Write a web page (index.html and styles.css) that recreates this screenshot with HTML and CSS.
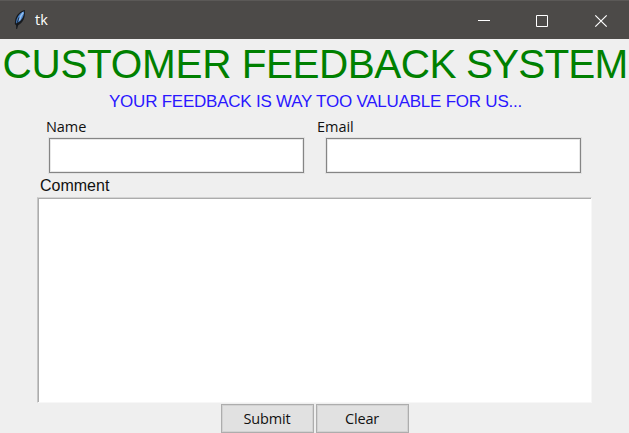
FILE: index.html
```html
<!DOCTYPE html>
<html lang="en">
<head>
<meta charset="utf-8">
<title>tk</title>
<link rel="stylesheet" href="styles.css">
</head>
<body>
<div class="window">
  <header class="titlebar">
    <svg class="feather" width="14" height="20" viewBox="0 0 14 20">
      <path d="M11.8 0C7.5 .8 3 5 2.2 10L1.8 14L3.3 15.5L3.7 19.3L5 15.5C9.8 12.5 12.6 8 11.8 0Z" fill="#171a1e"/>
      <path d="M11.1 1.2C7 2.5 3.2 7 3 13.6C8.2 11 11.2 7 11.1 1.2Z" fill="#4681c8"/>
      <path d="M10.2 2.5C8.3 4.7 7.1 7.5 6.3 10.5" stroke="#94bdec" stroke-width="1.7" fill="none"/>
      <path d="M6 7.5L4.3 12.5L3.7 19" stroke="#11151a" stroke-width=".8" fill="none"/>
    </svg>
    <span class="caption">tk</span>
    <svg class="controls" width="131" height="14" viewBox="0 0 131 14" fill="none" stroke="#fff">
      <path d="M0 6.5H12M58.5 1.5H69.5V12.5H58.5Z"/>
      <path d="M117.3 1.3L128.7 12.7M128.7 1.3L117.3 12.7" stroke-width="1.2"/>
    </svg>
  </header>
  <h1 class="title"><span class="first">CUSTOMER</span> FEEDBACK <span class="last">SYSTEM</span></h1>
  <p class="subtitle">YOUR FEEDBACK IS WAY TOO VALUABLE FOR US...</p>
  <form class="form">
    <div class="fields">
      <div class="field name"><label for="name">Name</label><input id="name" type="text"></div>
      <div class="field email"><label for="email">Email</label><input id="email" type="text"></div>
    </div>
    <label class="comment-label" for="comment">Comment</label>
    <textarea class="comment" id="comment"></textarea>
    <div class="actions">
      <button type="button">Submit</button>
      <button type="button">Clear</button>
    </div>
  </form>
</div>
</body>
</html>
```

FILE: styles.css
```css
* { box-sizing: border-box; }
body { margin: 0; overflow: hidden; background: #efefef; color: #111; font: 15px "Open Sans", sans-serif; }
.window { width: 629px; height: 433px; overflow: hidden; }
.titlebar { height: 39px; display: flex; align-items: center; padding: 0 20px 0 13px; background: #4c4a48; border-top: 1px solid #5b5957; color: #fff; }
.caption { margin: -1px 0 0 8px; font-size: 14.5px; line-height: 20px; }
.controls { margin: 1px 0 0 auto; }
.title { margin: 0; height: 50px; padding-left: 2.5px; font: 40.5px/50px "Liberation Sans", sans-serif; letter-spacing: -0.52px; color: #008000; white-space: nowrap; }
.first { letter-spacing: -0.3px; }
.last { margin-left: -0.8px; letter-spacing: -0.85px; }
.subtitle { margin: 0; height: 27px; padding-left: 109px; font: 17px/26px "Liberation Sans", sans-serif; letter-spacing: -0.23px; color: #2a17ff; white-space: nowrap; }
.form { margin: 0; }
.fields { display: flex; gap: 13px; padding-left: 37px; height: 58px; }
.field label { display: block; height: 22px; line-height: 21px; font-size: 14.5px; letter-spacing: -0.05px; }
.name { padding-left: 12px; }
.name label { margin-left: -3px; }
.email { padding-left: 9px; }
.email label { margin-left: -9px; }
.field input { display: block; width: 255px; height: 35px; margin: 0; padding: 4px; border: 1px solid #858585; border-radius: 0; box-shadow: 0 0 0 1px #e2e2e2, inset 0 0 0 1px #e8e8e8; outline: 0; background: #fff; }
.comment-label { display: block; height: 23px; padding-left: 40px; font: 16px/24px "Liberation Sans", sans-serif; }
.comment { display: block; width: 555px; height: 206px; margin: 0 0 0 37px; padding: 4px; border: 1px solid; border-color: #d4d4d4 #f7f7f7 #f7f7f7 #c6c6c6; box-shadow: inset 1px 1px 0 #acacac; border-radius: 0; resize: none; outline: 0; background: #fff; }
.actions { display: flex; gap: 2px; padding: 1px 0 0 221px; }
.actions button { width: 93px; height: 29px; padding: 0 1px 0 0; border: 1px solid #adadad; box-shadow: inset 0 0 0 1px #d2d2d2; background: #e1e1e1; color: #111; font: 14.5px/26px "Open Sans", sans-serif; letter-spacing: -0.15px; }
```
